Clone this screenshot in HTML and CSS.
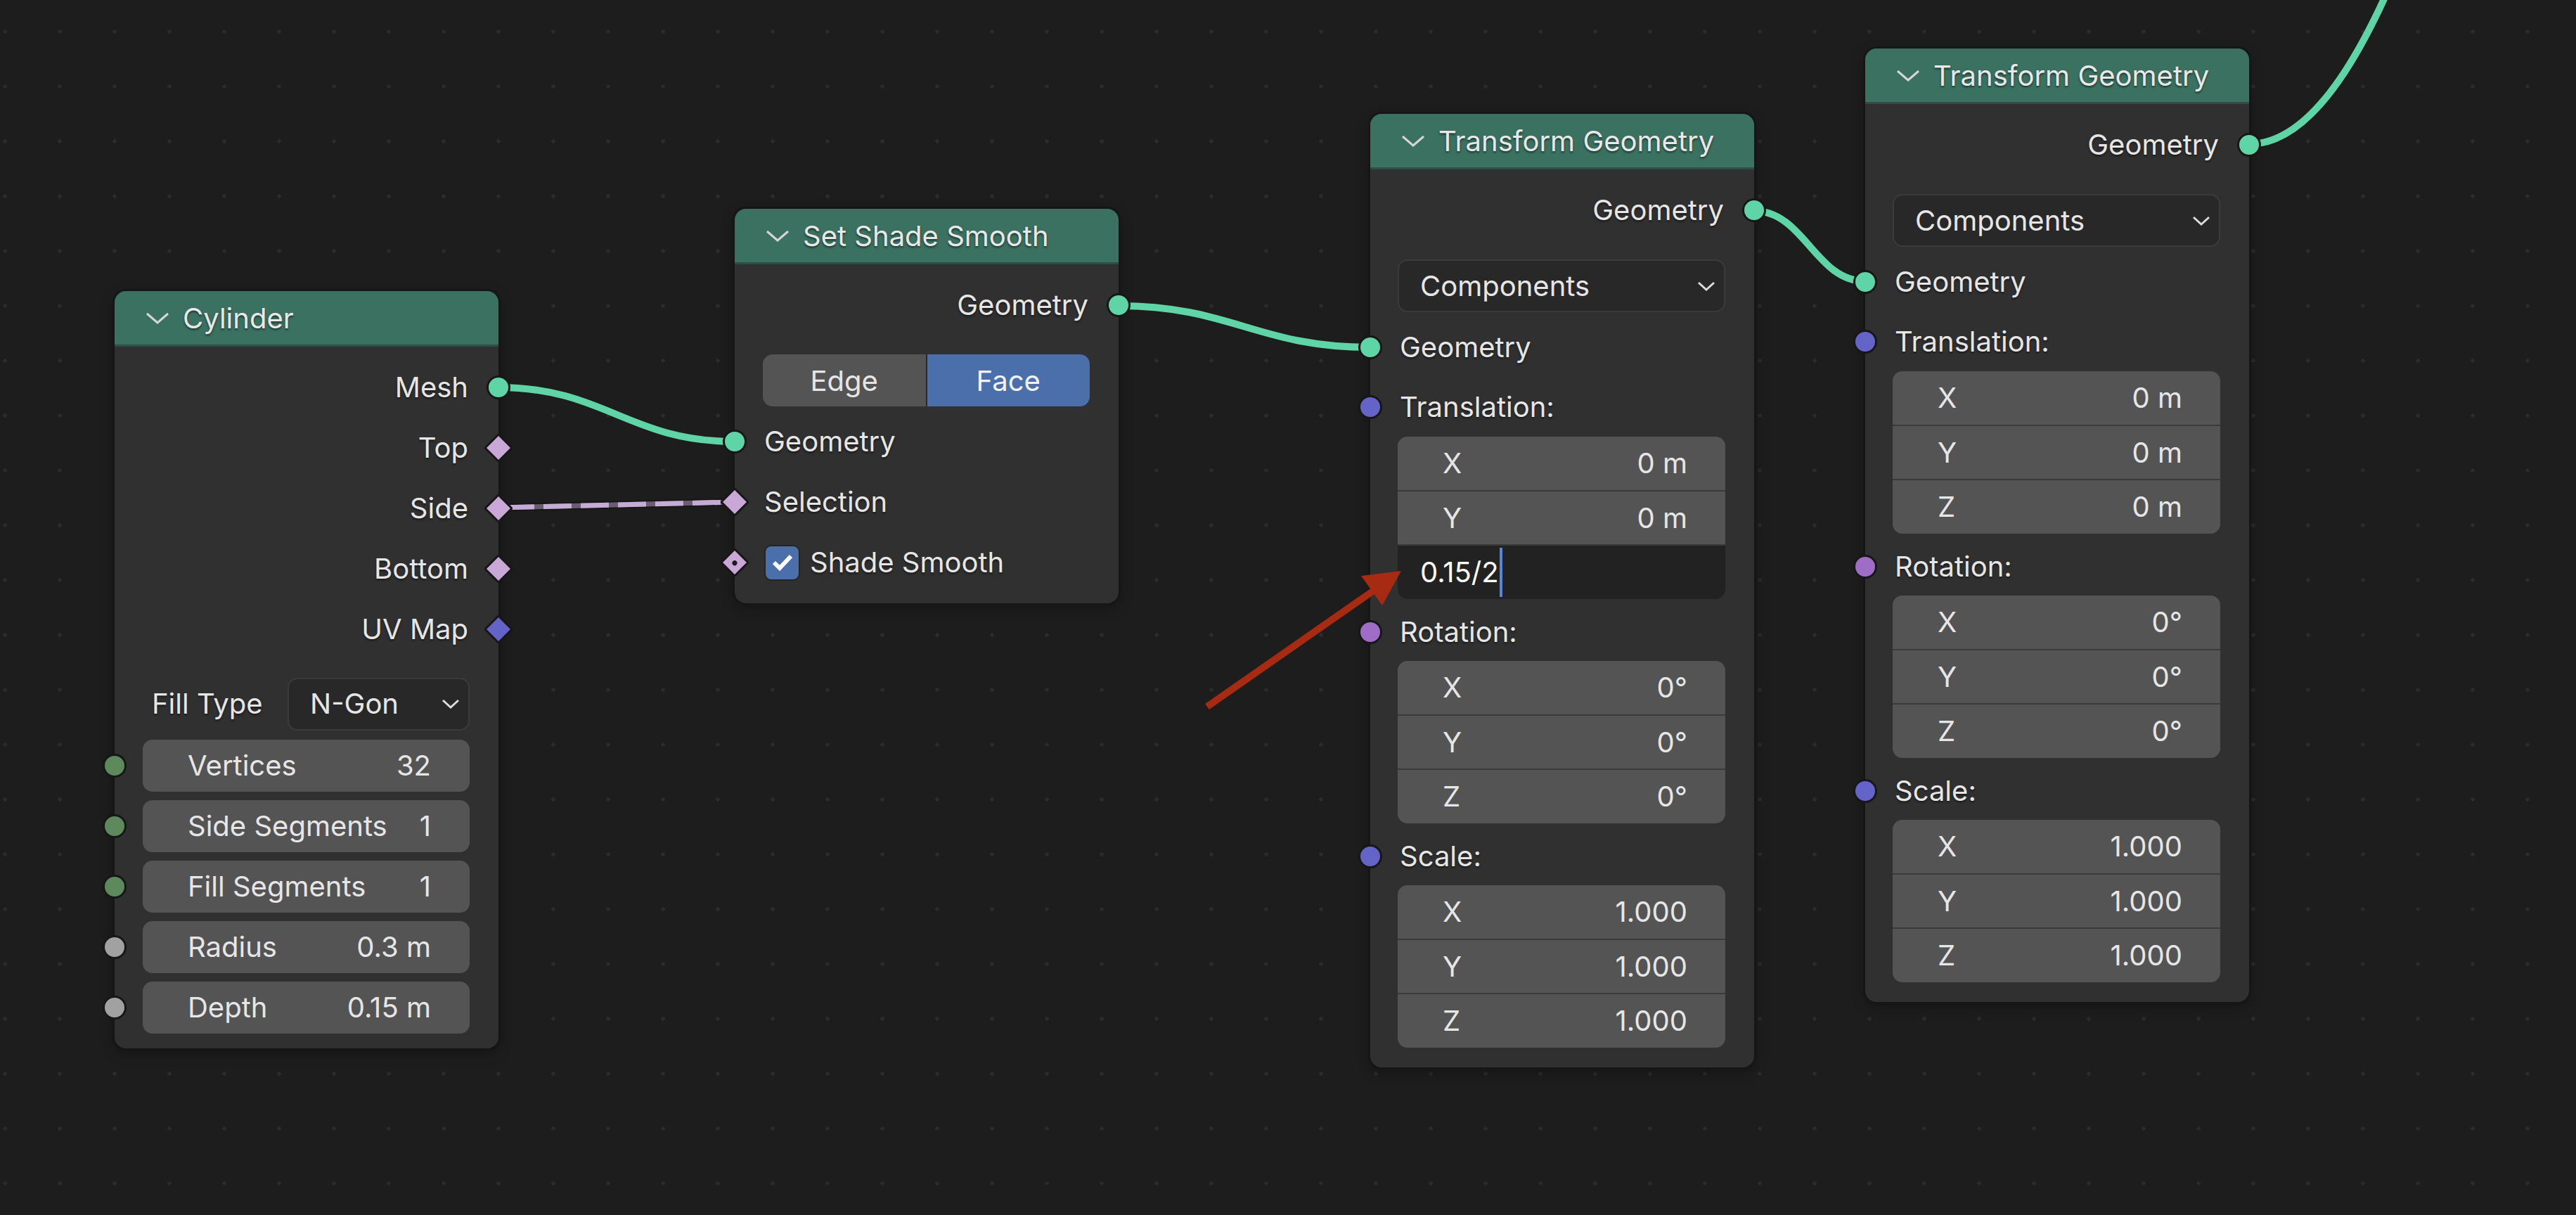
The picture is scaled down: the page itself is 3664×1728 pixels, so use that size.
FILE: index.html
```html
<!DOCTYPE html>
<html lang="en">
<head>
  <meta charset="UTF-8" />
  <title>Geometry Nodes</title>
  <link rel="stylesheet" href="styles.css">
</head>
<body>
  <div class="canvas">
    <!-- wires between sockets -->
    <svg class="links" width="3664" height="1728" viewBox="0 0 3664 1728">
      <path class="wire" d="M709 551 C860 551, 894 628, 1045 628" />
      <path class="wire" d="M1591 435 C1752 435, 1788 494, 1949 494" />
      <path class="wire" d="M2495 300 C2566 300, 2582 400, 2653 400" />
      <path class="wire" d="M3199 205 C3300 205, 3380 40, 3440 -120" />
      <line class="field-edge" x1="712" y1="722" x2="1043" y2="714" />
      <line class="field-base" x1="712" y1="722" x2="1043" y2="714" />
      <line class="field-dash" x1="712" y1="722" x2="1043" y2="714" />
    </svg>

    <div class="node n-cyl">
      <div class="node-head"><svg class="chev" width="36" height="20" viewBox="0 0 36 20"><polyline points="3,4 18,17 33,4" /></svg><span>Cylinder</span></div>
      <div class="node-body">
        <div class="row out"><span>Mesh</span><i class="sock geo"></i></div>
        <div class="row out"><span>Top</span><i class="sock dia bool"></i></div>
        <div class="row out"><span>Side</span><i class="sock dia bool"></i></div>
        <div class="row out"><span>Bottom</span><i class="sock dia bool"></i></div>
        <div class="row out"><span>UV Map</span><i class="sock dia vect"></i></div>
        <div class="row prop">
          <span>Fill Type</span>
          <div class="dropdown small"><span>N-Gon</span><svg class="dd-chev" width="26" height="16" viewBox="0 0 26 16"><polyline points="2,3 13,13 24,3" /></svg></div>
        </div>
        <div class="row fld first"><i class="sock int"></i><div class="field"><span>Vertices</span><span>32</span></div></div>
        <div class="row fld"><i class="sock int"></i><div class="field"><span>Side Segments</span><span>1</span></div></div>
        <div class="row fld"><i class="sock int"></i><div class="field"><span>Fill Segments</span><span>1</span></div></div>
        <div class="row fld"><i class="sock flt"></i><div class="field"><span>Radius</span><span>0.3 m</span></div></div>
        <div class="row fld"><i class="sock flt"></i><div class="field"><span>Depth</span><span>0.15 m</span></div></div>
      </div>
    </div>

    <div class="node n-smooth">
      <div class="node-head"><svg class="chev" width="36" height="20" viewBox="0 0 36 20"><polyline points="3,4 18,17 33,4" /></svg><span>Set Shade Smooth</span></div>
      <div class="node-body">
        <div class="row out"><span>Geometry</span><i class="sock geo"></i></div>
        <div class="seg"><span>Edge</span><span class="on">Face</span></div>
        <div class="row in gap"><i class="sock geo"></i><span>Geometry</span></div>
        <div class="row in"><i class="sock dia bool"></i><span>Selection</span></div>
        <div class="row in chk">
          <i class="sock dia bool dot"></i>
          <span class="box"><svg width="30" height="26" viewBox="0 0 30 26"><polyline points="3,13 11,21 27,4" /></svg></span>
          <span>Shade Smooth</span>
        </div>
      </div>
    </div>

    <div class="node n-tf n-tf1">
      <div class="node-head"><svg class="chev" width="36" height="20" viewBox="0 0 36 20"><polyline points="3,4 18,17 33,4" /></svg><span>Transform Geometry</span></div>
      <div class="node-body">
        <div class="row out"><span>Geometry</span><i class="sock geo"></i></div>
        <div class="dropdown"><span>Components</span><svg class="dd-chev" width="26" height="16" viewBox="0 0 26 16"><polyline points="2,3 13,13 24,3" /></svg></div>
        <div class="row in gap"><i class="sock geo"></i><span>Geometry</span></div>
        <div class="row in lbl first"><i class="sock vect"></i><span>Translation:</span></div>
        <div class="vec">
          <div class="vrow"><span>X</span><span>0 m</span></div>
          <div class="vrow"><span>Y</span><span>0 m</span></div>
          <div class="vrow edit"><span>0.15/2</span><i class="caret"></i></div>
        </div>
        <div class="row in lbl"><i class="sock rot"></i><span>Rotation:</span></div>
        <div class="vec">
          <div class="vrow"><span>X</span><span>0°</span></div>
          <div class="vrow"><span>Y</span><span>0°</span></div>
          <div class="vrow"><span>Z</span><span>0°</span></div>
        </div>
        <div class="row in lbl"><i class="sock vect"></i><span>Scale:</span></div>
        <div class="vec">
          <div class="vrow"><span>X</span><span>1.000</span></div>
          <div class="vrow"><span>Y</span><span>1.000</span></div>
          <div class="vrow"><span>Z</span><span>1.000</span></div>
        </div>
      </div>
    </div>

    <div class="node n-tf n-tf2">
      <div class="node-head"><svg class="chev" width="36" height="20" viewBox="0 0 36 20"><polyline points="3,4 18,17 33,4" /></svg><span>Transform Geometry</span></div>
      <div class="node-body">
        <div class="row out"><span>Geometry</span><i class="sock geo"></i></div>
        <div class="dropdown"><span>Components</span><svg class="dd-chev" width="26" height="16" viewBox="0 0 26 16"><polyline points="2,3 13,13 24,3" /></svg></div>
        <div class="row in gap"><i class="sock geo"></i><span>Geometry</span></div>
        <div class="row in lbl first"><i class="sock vect"></i><span>Translation:</span></div>
        <div class="vec">
          <div class="vrow"><span>X</span><span>0 m</span></div>
          <div class="vrow"><span>Y</span><span>0 m</span></div>
          <div class="vrow"><span>Z</span><span>0 m</span></div>
        </div>
        <div class="row in lbl"><i class="sock rot"></i><span>Rotation:</span></div>
        <div class="vec">
          <div class="vrow"><span>X</span><span>0°</span></div>
          <div class="vrow"><span>Y</span><span>0°</span></div>
          <div class="vrow"><span>Z</span><span>0°</span></div>
        </div>
        <div class="row in lbl"><i class="sock vect"></i><span>Scale:</span></div>
        <div class="vec">
          <div class="vrow"><span>X</span><span>1.000</span></div>
          <div class="vrow"><span>Y</span><span>1.000</span></div>
          <div class="vrow"><span>Z</span><span>1.000</span></div>
        </div>
      </div>
    </div>

    <!-- red annotation arrow -->
    <svg class="overlay" width="3664" height="1728" viewBox="0 0 3664 1728">
      <line class="arrow-line" x1="1717" y1="1005" x2="1958" y2="837" />
      <polygon class="arrow-head" points="1993,812 1936,819 1966,861" />
    </svg>
  </div>
</body>
</html>
```

FILE: styles.css
```css
* { box-sizing: border-box; }
body { margin: 0; background: #1d1d1d; overflow: hidden; font-family: Inter, "Noto Sans", sans-serif; color: #e6e6e6; }

.canvas { position: relative; width: 3664px; height: 1728px; background-color: #1d1d1d; background-image: radial-gradient(circle, #2b2b2b 0, #2b2b2b 2.5px, transparent 3px); background-size: 78px 78px; background-position: -32px 6px; }

.links, .overlay { position: absolute; left: 0; top: 0; }
.links { z-index: 0; }
.overlay { z-index: 5; }
.wire { fill: none; stroke: #5fd4a7; stroke-width: 10; }
.field-edge { stroke: #171717; stroke-width: 11; }
.field-base { stroke: #6b5c72; stroke-width: 7; }
.field-dash { stroke: #c6abd7; stroke-width: 7; stroke-dasharray: 40 13; stroke-dashoffset: -8; }
.arrow-line { stroke: #a62b12; stroke-width: 10; }
.arrow-head { fill: #a62b12; }

/* nodes */
.node { position: absolute; z-index: 1; width: 546px; background: #303030; border-radius: 16px; box-shadow: 0 0 0 3px #161616, 0 6px 18px rgba(0,0,0,0.35); }
.n-cyl { left: 163px; top: 414px; }
.n-smooth { left: 1045px; top: 297px; }
.n-tf1 { left: 1949px; top: 162px; }
.n-tf2 { left: 2653px; top: 69px; }

.node-head { height: 79px; display: flex; align-items: center; gap: 18px; padding-left: 43px; background: #3a7161; border-bottom: 3px solid #2a4f45; border-radius: 16px 16px 0 0; font-size: 40px; color: #e8e8e8; text-shadow: 0 2px 3px rgba(0,0,0,0.55); }
.chev polyline { fill: none; stroke: #d6d6d6; stroke-width: 3; }

.node-body { display: flex; flex-direction: column; padding: 15px 0 15px; }
.n-tf .node-body { padding-bottom: 28px; }

.row { position: relative; height: 86px; display: flex; align-items: center; font-size: 40px; line-height: 1; text-shadow: 0 2px 3px rgba(0,0,0,0.5); }
.row.out { justify-content: flex-end; padding-right: 43px; }
.row.in { padding-left: 42px; }
.row.gap { margin-top: 7px; }
.row.lbl { height: 82px; margin-top: 6px; }
.row.lbl.first { height: 84px; margin-top: 0; }
.row.prop { margin-top: 20px; padding: 0 41px 0 53px; justify-content: space-between; }
.row.fld { padding: 0 41px 0 40px; }
.row.fld.first { margin-top: 2px; }

/* sockets */
.sock { position: absolute; top: 50%; width: 34px; height: 34px; margin-top: -17px; border-radius: 50%; border: 3px solid #171717; }
.row.out .sock { right: -17px; }
.row.in .sock, .row.fld .sock { left: -17px; }
.sock.dia { width: 30px; height: 30px; margin-top: -15px; border-radius: 3px; transform: rotate(45deg); }
.row.out .sock.dia { right: -15px; }
.row.in .sock.dia { left: -15px; }
.sock.dot::after { content: ""; position: absolute; left: 50%; top: 50%; width: 7px; height: 7px; margin: -3.5px 0 0 -3.5px; border-radius: 50%; background: #1a1a1a; }
.geo { background: #5fd4a7; }
.bool { background: #c9a7d7; }
.vect { background: #6464c8; }
.rot { background: #a06dc6; }
.int { background: #5d8a5d; }
.flt { background: #a1a1a1; }

/* widgets */
.field { flex: 1; height: 74px; display: flex; justify-content: space-between; align-items: center; padding: 0 55px 0 64px; background: #545454; border-radius: 14px; text-shadow: none; }

.dropdown { height: 75px; margin: 27px 41px 0 39px; display: flex; align-items: center; justify-content: space-between; padding: 0 12px 0 30px; background: #282828; border: 2px solid #3b3b3b; border-radius: 14px; font-size: 40px; line-height: 1; }
.dropdown.small { width: 259px; margin: 0; text-shadow: none; }
.dd-chev polyline { fill: none; stroke: #dcdcdc; stroke-width: 3; }

.seg { height: 74px; margin: 27px 41px 0 40px; display: flex; gap: 2px; background: #2a2a2a; border-radius: 14px; overflow: hidden; font-size: 40px; }
.seg span { flex: 1; display: flex; align-items: center; justify-content: center; background: #545454; }
.seg span.on { background: #4a6fab; color: #f2f2f2; }

.chk { gap: 14px; }
.box { width: 51px; height: 51px; display: flex; align-items: center; justify-content: center; background: #4a6fab; border: 2px solid #242424; border-radius: 10px; }
.box polyline { fill: none; stroke: #fff; stroke-width: 6; }

.vec { height: 231px; margin: 0 41px 0 39px; display: flex; flex-direction: column; gap: 2px; background: #3a3a3a; border-radius: 14px; overflow: hidden; font-size: 40px; line-height: 1; }
.vrow { flex: 1; display: flex; align-items: center; justify-content: space-between; padding: 0 54px 0 64px; background: #545454; }
.vrow.edit { justify-content: flex-start; padding-left: 32px; background: #222222; color: #ffffff; }
.caret { width: 4px; height: 70px; margin-left: 1px; background: #5686d8; }
```
